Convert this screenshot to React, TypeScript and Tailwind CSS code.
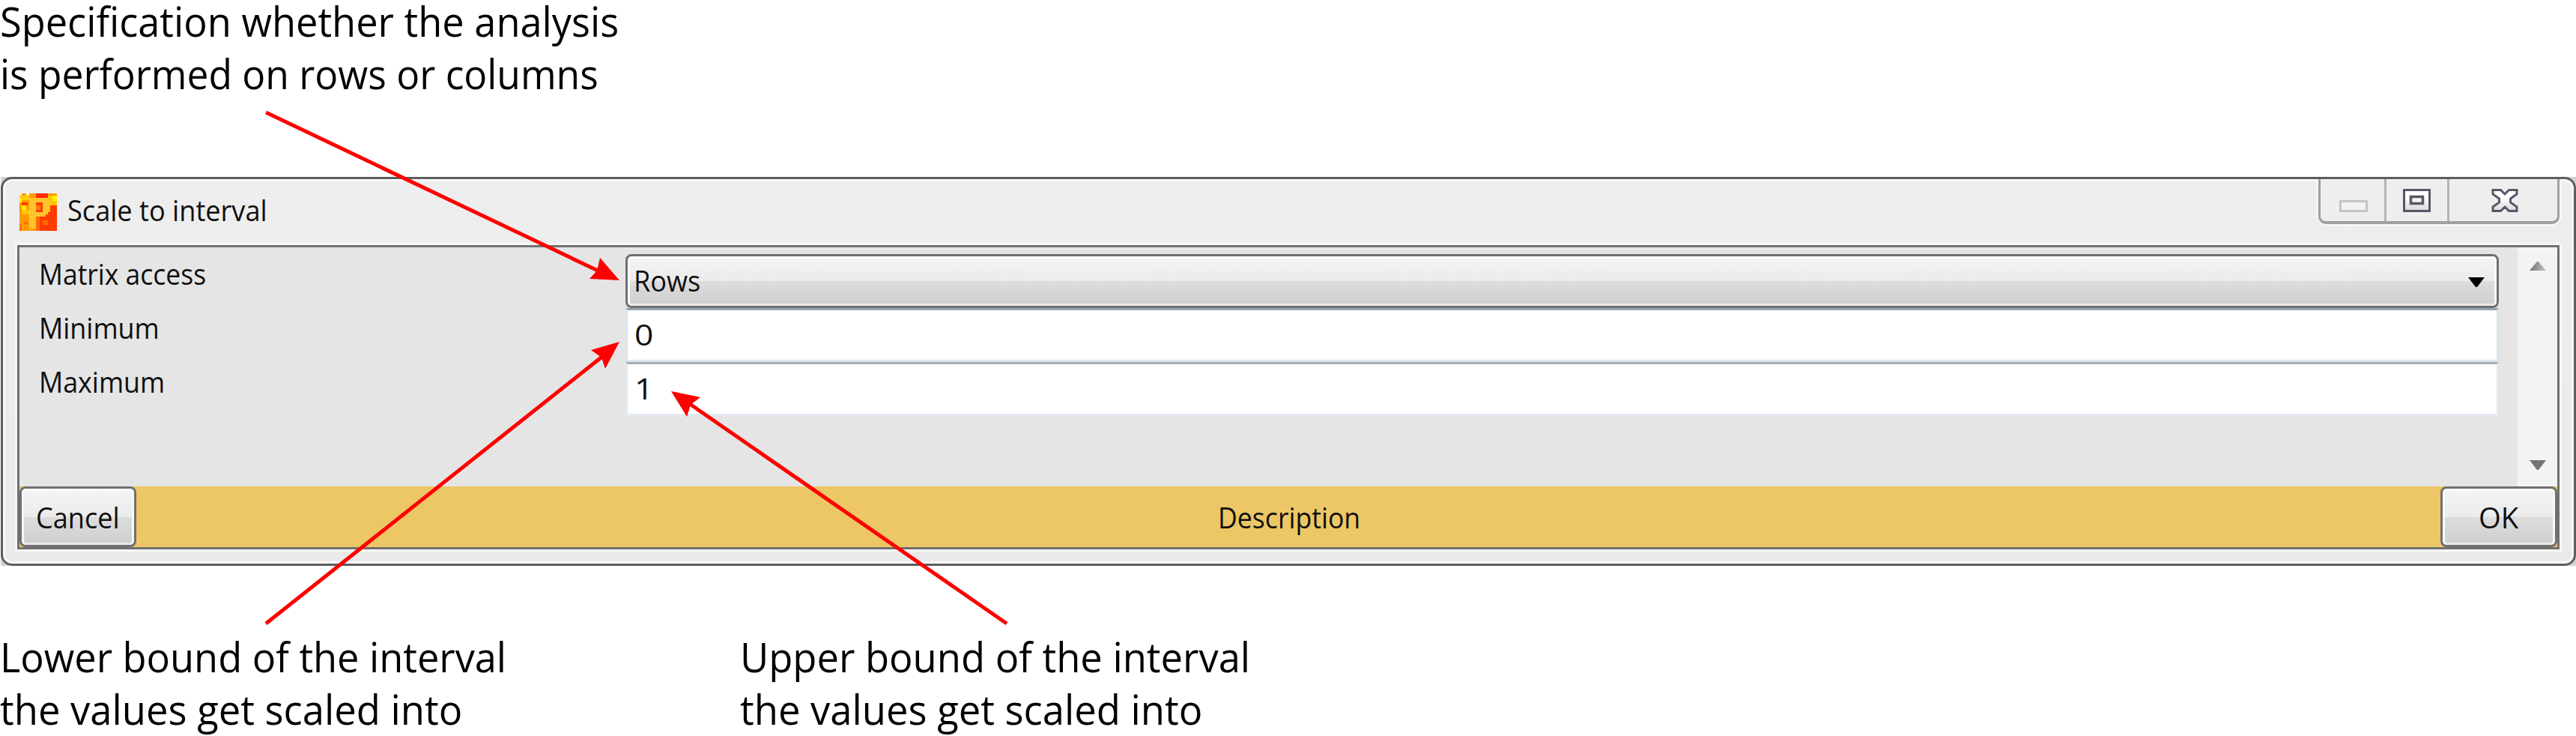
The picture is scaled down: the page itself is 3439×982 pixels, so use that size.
import { useLayoutEffect, useRef, type ReactNode } from "react";

function FitText({ width, className, children }: { width: number; className: string; children: ReactNode }) {
  const ref = useRef<HTMLSpanElement>(null);
  useLayoutEffect(() => {
    const el = ref.current;
    if (el) el.style.transform = `scaleX(${width / el.offsetWidth})`;
  }, [width]);
  return (
    <span ref={ref} className={`inline-block origin-left whitespace-nowrap ${className}`}>
      {children}
    </span>
  );
}

const note = "font-['Open_Sans','Noto_Sans',sans-serif] text-[55px] leading-[56px] text-black";
const ui = "font-['Open_Sans','Noto_Sans',sans-serif] text-[39px] leading-[48px] text-[#101010]";

function Note({ lines }: { lines: [string, number][] }) {
  return (
    <div className="flex flex-col items-start gap-[14px]">
      {lines.map(([text, width]) => (
        <FitText key={text} width={width} className={note}>{text}</FitText>
      ))}
    </div>
  );
}

function AppIcon() {
  return (
    <svg width="50" height="50" viewBox="0 0 50 50" shapeRendering="crispEdges" className="shrink-0">
      <rect width="50" height="50" fill="#ff9a00" />
      <path d="M0 3h13v6H0zM3 22h10v6H3zM38 3h12v13h-9v-6h-3z" fill="#ffc800" />
      <path d="M0 0h3v3H0zM9 0h4v3H9z" fill="#fff7a0" />
      <path d="M3 16h6v6H3zM44 3h6v7h-6zM0 6h3v6H0z" fill="#fff000" />
      <path d="M22 0h16v6H22z" fill="#ff2a00" />
      <path d="M3 12h8v4H3zM31 6h4v3h-4zM41 16h9v34H22V31h13v-6h6z" fill="#ff3c00" />
      <path d="M0 41h3v9H0zM6 38h5v3H6zM31 36h7v6h-7zM22 31h5v19h-5z" fill="#ff6a00" />
      <path d="M13 6h25v3h3v16h-3v3h-3v3H22v16h-9z" fill="#ffc32c" />
      <path d="M22 12h9v13h-9z" fill="#ff3c00" />
      <path d="M22 16h6v6h-6z" fill="#ff8000" />
    </svg>
  );
}

function CaptionButtons() {
  return (
    <div className="flex h-[60px] w-[322px] rounded-b-[10px] border-x-[3px] border-b-4 border-[#a0a0a0] bg-[#eeeeee] shadow-[0_3px_0_0_#f6f6f6,3px_0_0_0_#f6f6f6,-3px_0_0_0_#f6f6f6]">
      <div className="flex w-[88px] items-start border-r-[3px] border-[#b4b4b4] pt-[28px] pl-[25px]">
        <div className="h-4 w-[38px] border-[3px] border-[#c4c4c4] bg-[#f3f3f3]" />
      </div>
      <div className="flex w-[84px] items-start border-r-[3px] border-[#b4b4b4] pt-[13px] pl-[22px]">
        <svg width="37" height="31" viewBox="0 0 37 31">
          <defs>
            <linearGradient id="glyph" x1="0" y1="0" x2="0" y2="1">
              <stop offset="0.35" stopColor="#ffffff" />
              <stop offset="1" stopColor="#d8d8d8" />
            </linearGradient>
          </defs>
          <path d="M1.5 1.5h34v28h-34z" fill="url(#glyph)" stroke="#555869" strokeWidth="3" />
          <path d="M10.5 10.5h16v9h-16z" fill="#f6f6f6" stroke="#555869" strokeWidth="3.5" />
        </svg>
      </div>
      <div className="pt-[13px] pl-[56px]">
        <svg width="36" height="31" viewBox="0 0 36 31">
          <path d="M2 1.5h10.500L18 7l5.500-5.500H34V7l-8.500 6v5l8.500 6v5.500H23.500L18 24l-5.500 5.500H2V24l8.500-6v-5L2 7z" fill="url(#glyph)" stroke="#555869" strokeWidth="3" />
        </svg>
      </div>
    </div>
  );
}

const face =
  "bg-[linear-gradient(#f4f4f4_0%,#ebebeb_50%,#dddddd_50%,#cecece_100%)] border-[3px] border-[#707070] rounded-[8px] shadow-[inset_0_3px_0_0_#fdfdfd,inset_3px_0_0_0_#f8f8f8,inset_-3px_0_0_0_#f8f8f8,inset_0_-3px_0_0_#e8e8e8]";

export default function App() {
  return (
    <div className="relative flex h-[982px] w-[3439px] flex-col overflow-hidden bg-white">
      <div className="h-[236px] shrink-0">
        <Note lines={[["Specification whether the analysis", 826], ["is performed on rows or columns", 799]]} />
      </div>

      <div className="ml-px h-[519px] w-[3438px] shrink-0 bg-[#d2d2d2]">
        <div className="flex h-[519px] flex-col rounded-[15px] border-[3px] border-[#5e5e5e] bg-[linear-gradient(#eeeeee,#eaeaea)] shadow-[inset_0_0_0_3px_#f8f8f8]">
          <div className="flex h-[85px] shrink-0 items-start justify-between pr-[19px] pl-[22px]">
            <div className="flex items-start pt-[19px]">
              <AppIcon />
              <div className="-mt-[2px] ml-[14px]">
                <FitText width={267} className={ui}>Scale to interval</FitText>
              </div>
            </div>
            <CaptionButtons />
          </div>

          <div className="mx-4 flex h-[412px] flex-col border-[3px] border-[#f6f6f6]">
            <div className="flex h-[406px] flex-col border-[3px] border-[#707070]">
              <div className="flex h-[319px] bg-[#e5e5e5]">
                <div className="flex w-[809px] flex-col pt-[11px] pl-[26px]">
                  <div className="h-[72px]"><FitText width={223} className={ui}>Matrix access</FitText></div>
                  <div className="h-[72px]"><FitText width={161} className={ui}>Minimum</FitText></div>
                  <div className="h-[72px]"><FitText width={168} className={ui}>Maximum</FitText></div>
                </div>
                <div className="flex w-[2501px] flex-col pt-[9px]">
                  <div className={`flex h-[72px] items-start justify-between pt-[8px] pr-4 pl-[8px] ${face}`}>
                    <FitText width={89} className={ui}>Rows</FitText>
                    <svg width="22" height="13" viewBox="0 0 22 13" className="mt-[20px]"><path d="M0 0h22L12 13h-2z" fill="#000" /></svg>
                  </div>
                  <div className="h-[72px] border-[3px] border-[#d9e5ee] border-t-[#95a5b2] bg-white pt-[8px] pl-[9px]">
                    <FitText width={25} className={ui}>0</FitText>
                  </div>
                  <div className="h-[72px] border-[3px] border-[#e3e9f0] border-t-[#ababaf] bg-white pt-[8px] pl-[9px]">
                    <FitText width={25} className={ui}>1</FitText>
                  </div>
                </div>
                <div className="ml-[25px] flex w-[53px] flex-col items-center justify-between bg-[#f3f3f3] pt-[19px] pb-[22px]">
                  <svg width="22" height="12" viewBox="0 0 22 12">
                    <defs>
                      <linearGradient id="up">
                        <stop offset="0" stopColor="#707070" />
                        <stop offset="1" stopColor="#c4c4c4" />
                      </linearGradient>
                    </defs>
                    <path d="M0 12L10 0h2l10 12z" fill="url(#up)" />
                  </svg>
                  <svg width="22" height="13" viewBox="0 0 22 13"><path d="M0 0h22L12 13h-2z" fill="#747474" /></svg>
                </div>
              </div>
              <div className="flex h-[81px] items-stretch justify-between bg-[#edc765]">
                <div className={`w-[156px] pt-[14px] pl-[19px] ${face}`}>
                  <FitText width={112} className={ui}>Cancel</FitText>
                </div>
                <div className="w-[188px] pt-[17px]">
                  <FitText width={190} className={ui}>Description</FitText>
                </div>
                <div className={`w-[156px] pt-[14px] pl-[48px] ${face}`}>
                  <FitText width={53} className={ui}>OK</FitText>
                </div>
              </div>
            </div>
          </div>
        </div>
      </div>

      <div className="flex pt-[93px]">
        <div className="w-[988px]">
          <Note lines={[["Lower bound of the interval", 676], ["the values get scaled into", 617]]} />
        </div>
        <Note lines={[["Upper bound of the interval", 681], ["the values get scaled into", 617]]} />
      </div>

      <svg width="3439" height="982" viewBox="0 0 3439 982" className="pointer-events-none absolute inset-0">
        <g stroke="#ff0000" strokeWidth="5">
          <path d="M355 150L800 362M355 832L805 475M1344 832L918 537" />
        </g>
        <g fill="#ff0000">
          <path d="M827 374l-26-30-4 17-10 11zM827 456l-38 11 14 10 5 15zM896 522l39 8-13 10-5 16z" />
        </g>
      </svg>
    </div>
  );
}
